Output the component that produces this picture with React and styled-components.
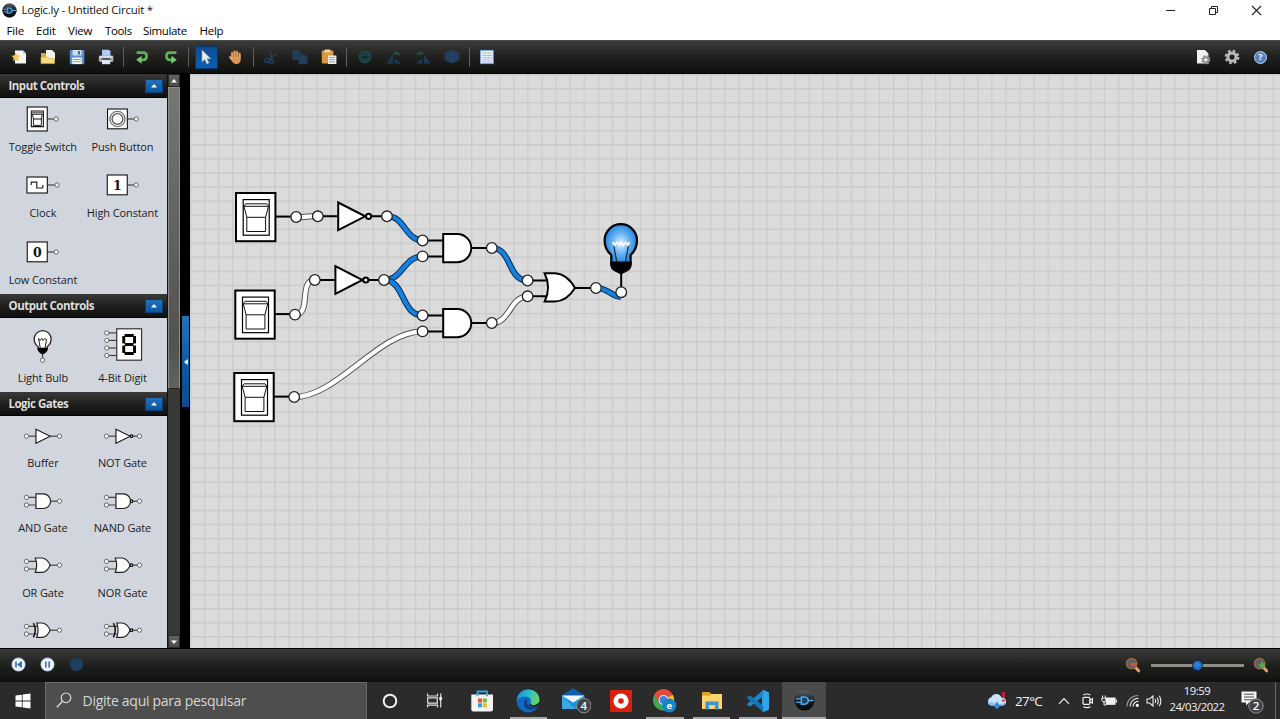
import React from "react";
import styled, { createGlobalStyle, css } from "styled-components";

const GlobalStyle = createGlobalStyle`
  * { box-sizing: border-box; }
  html, body { margin: 0; padding: 0; overflow: hidden; }
  body { font-family: "Open Sans", "Noto Sans", sans-serif; background: #000; }
  svg { display: block; flex: none; }
`;

const Screen = styled.div`
  width: 1280px;
  height: 719px;
  display: flex;
  flex-direction: column;
  overflow: hidden;
`;

/* ---------- window chrome ---------- */

const TitleBar = styled.header`
  height: 21px;
  flex: none;
  display: flex;
  align-items: center;
  padding: 0 2px 1px 2px;
  background: #fff;
`;

const Title = styled.span`
  margin-left: 4.5px;
  font-size: 11.5px;
  line-height: 20px;
  letter-spacing: -0.25px;
  color: #111;
  white-space: nowrap;
  flex: 1;
`;

const WindowButton = styled.div`
  width: 43px;
  height: 20px;
  display: flex;
  align-items: center;
  justify-content: center;
`;

const MenuBar = styled.nav`
  height: 19px;
  flex: none;
  display: flex;
  align-items: center;
  padding-left: 6.5px;
  background: #fff;
`;

const MenuItem = styled.span`
  width: ${(p) => p.$w}px;
  font-size: 11.5px;
  line-height: 19px;
  letter-spacing: ${(p) => p.$ls || 0}px;
  color: #000;
  white-space: nowrap;
`;

const darkBar = css`
  background: linear-gradient(#3a3b39, #20211f 50%, #0f100e);
`;

const ToolBar = styled.div`
  height: 34px;
  flex: none;
  display: flex;
  align-items: center;
  padding: 0 5px 0 4.5px;
  border-bottom: 1px solid #000;
  border-top: 1px solid #4a4a4a;
  ${darkBar}
`;

const ToolCell = styled.div`
  width: 29px;
  height: 32px;
  display: flex;
  align-items: center;
  justify-content: center;
`;

const ActiveTool = styled.div`
  width: 23px;
  height: 23px;
  display: flex;
  align-items: center;
  justify-content: center;
  background: linear-gradient(#0d4e92, #0b5db0);
  border: 1px solid #07366a;
`;

const Separator = styled.div`
  width: 6.7px;
  height: 20px;
  display: flex;
  justify-content: center;
  &::after {
    content: "";
    width: 1px;
    background: #5d5d5b;
  }
`;

const Spacer = styled.div`
  flex: 1;
`;

/* ---------- work area ---------- */

const WorkArea = styled.div`
  height: 574px;
  flex: none;
  display: flex;
`;

const SideBar = styled.aside`
  width: 168px;
  height: 574px;
  overflow: hidden;
  background: #d1d6de;
  border-right: 1px solid #111;
`;

const SectionHeader = styled.div`
  height: 24px;
  display: flex;
  align-items: center;
  justify-content: space-between;
  padding: 0 4px 1px 8.5px;
  border-bottom: 1px solid #000;
  font-size: 11.5px;
  font-weight: 700;
  letter-spacing: -0.5px;
  color: #dcdcdc;
  white-space: nowrap;
  ${darkBar}
`;

const CollapseButton = styled.div`
  width: 18px;
  height: 14px;
  margin-top: 2px;
  display: flex;
  align-items: center;
  justify-content: center;
  background: linear-gradient(#2270bd, #0a559f);
  border: 1px solid #0a3e78;
`;

const Palette = styled.div`
  height: ${(p) => p.$h}px;
  overflow: hidden;
  padding-left: 3.2px;
  display: grid;
  grid-template-columns: 79.5px 79.5px;
  grid-auto-rows: ${(p) => p.$row}px;
`;

const PaletteItem = styled.div`
  display: flex;
  flex-direction: column;
  align-items: center;
`;

const PaletteLabel = styled.span`
  font-size: 11px;
  line-height: 14px;
  letter-spacing: -0.12px;
  color: #1c1c1c;
  white-space: nowrap;
`;

const ScrollBar = styled.div`
  width: 12px;
  height: 574px;
  display: flex;
  flex-direction: column;
  background: #383935;
`;

const ScrollButton = styled.div`
  height: 13px;
  display: flex;
  align-items: center;
  justify-content: center;
  background: linear-gradient(#63645f, #4b4c49);
  border: 1px solid #2b2b29;
`;

const ScrollThumb = styled.div`
  height: 302px;
  background: linear-gradient(#767772, #52534f 85%, #62635f);
  border: 1px solid #8b8c87;
  border-bottom-color: #222;
`;

const Divider = styled.div`
  width: 10px;
  height: 574px;
  padding: 242px 1px 0 2px;
  background: #000;
`;

const DividerHandle = styled.div`
  height: 91px;
  display: flex;
  align-items: center;
  justify-content: center;
  background: linear-gradient(#2672b8, #0c56a0 60%, #0b4c90);
`;

const Canvas = styled.main`
  width: 1090px;
  height: 574px;
  background-color: #dbdbdb;
`;

/* ---------- status bar ---------- */

const StatusBar = styled.div`
  height: 34px;
  flex: none;
  display: flex;
  align-items: center;
  padding: 0 11px 2px 4px;
  border-top: 1px solid #000;
  ${darkBar}
`;

const Slider = styled.div`
  width: 93px;
  height: 14px;
  margin: 1px 9px 0 10px;
  display: flex;
  align-items: center;
  justify-content: center;
  background: linear-gradient(#8d8c86, #8d8c86) center / 100% 3px no-repeat;
`;

const SliderKnob = styled.div`
  width: 11px;
  height: 11px;
  border-radius: 50%;
  background: radial-gradient(circle at 50% 40%, #3288d8, #0b5cae);
  border: 1px solid #072f5b;
`;

/* ---------- taskbar ---------- */

const TaskBar = styled.footer`
  height: 37px;
  flex: none;
  display: flex;
  background: #2b2b2b;
`;

const StartButton = styled.div`
  width: 45px;
  display: flex;
  align-items: center;
  justify-content: center;
`;

const SearchBox = styled.div`
  width: 322px;
  display: flex;
  align-items: center;
  padding: 0 0 2px 10px;
  background: #4e4e4e;
  border: 1px solid #6c6c6c;
  border-bottom: 0;
`;

const SearchText = styled.span`
  margin-left: 10.5px;
  font-size: 14px;
  letter-spacing: -0.28px;
  color: #d6d6d6;
  white-space: nowrap;
`;

const TaskButton = styled.div`
  width: ${(p) => p.$w}px;
  height: 37px;
  display: flex;
  align-items: center;
  justify-content: center;
  background: ${(p) => (p.$active ? "#4b4b4b" : "transparent")};
  ${(p) =>
    p.$line &&
    css`
      background-image: linear-gradient(#aaa6ab, #aaa6ab);
      background-size: ${p.$line}px 2px;
      background-position: center bottom;
      background-repeat: no-repeat;
    `}
`;

const Tray = styled.div`
  display: flex;
  align-items: center;
  margin-left: auto;
  color: #f2f2f2;
`;

const TrayCell = styled.div`
  width: ${(p) => p.$w}px;
  display: flex;
  align-items: center;
  justify-content: center;
`;

const Temperature = styled.span`
  width: 35px;
  font-size: 13.5px;
  letter-spacing: -0.65px;
  white-space: nowrap;
`;

const Clock = styled.div`
  width: 66px;
  padding-bottom: 3px;
  display: flex;
  flex-direction: column;
  align-items: center;
  font-size: 11.3px;
  line-height: 16.5px;
  letter-spacing: -0.48px;
`;

const ShowDesktop = styled.div`
  width: 5px;
  height: 37px;
  border-left: 1px solid #6a6a6a;
`;

/* ---------- small drawings ---------- */

const Arrow = ({ dir = "up", size = 6 }) => {
  const d = { up: "M0 4.5L3 1L6 4.5Z", down: "M0 1.5L3 5L6 1.5Z", left: "M4.8 0L1 3L4.8 6Z" }[dir];
  return (
    <svg width={size} height={size} viewBox="0 0 6 6">
      <path d={d} fill="#fff" />
    </svg>
  );
};

const LogicLogo = ({ size }) => (
  <svg width={size} height={size} viewBox="0 0 20 20">
    <defs>
      <linearGradient id="orb" x1="0" y1="0" x2="0" y2="1">
        <stop offset="0" stopColor="#5a6268" />
        <stop offset=".5" stopColor="#161c22" />
        <stop offset="1" stopColor="#05080b" />
      </linearGradient>
    </defs>
    <circle cx="10" cy="10" r="9.6" fill="url(#orb)" />
    <path d="M2 8.4H7M2 11.8H7M13 10H18.5" stroke="#5aa9e6" strokeWidth="1.3" fill="none" />
    <path d="M7 6.6H10Q13.6 7 13.6 10T10 13.6H7Z" stroke="#5aa9e6" strokeWidth="1.4" fill="#17466f" />
  </svg>
);

const Svg16 = ({ children, size = 16 }) => (
  <svg width={size} height={size} viewBox="0 0 16 16">
    {children}
  </svg>
);

const NewIcon = () => (
  <Svg16>
    <path d="M4 1.5H12L15 4.5V14.5H4Z" fill="#f4f4f2" />
    <path d="M12 1.5V4.5H15Z" fill="#c9c9c9" />
    <path d="M4.7 4L5.8 6.6L8.6 7L6.6 8.9L7.1 11.7L4.7 10.3L2.3 11.7L2.8 8.9L.8 7L3.6 6.6Z" fill="#f7cf52" stroke="#e3a52a" strokeWidth=".5" />
  </Svg16>
);
const OpenIcon = () => (
  <Svg16>
    <path d="M1 4H5L6 5H13V14H1Z" fill="#d9a83c" />
    <path d="M6 1H12L15 4V11H6Z" fill="#f6f3ea" />
    <path d="M1 8.2H8L9.5 9.6H14.5V14.6H1Z" fill="#f6dc83" stroke="#d9ad45" strokeWidth=".6" />
  </Svg16>
);
const SaveIcon = () => (
  <Svg16>
    <rect x=".8" y="1" width="14.5" height="14.2" rx="1.2" fill="#5b8ed0" />
    <rect x="3.6" y="1" width="9" height="5.5" fill="#cddcf0" />
    <rect x="9" y="2" width="2" height="3.5" fill="#44699f" />
    <rect x="3.3" y="8.5" width="9.5" height="6.5" fill="#f3f6ee" />
    <path d="M4.3 10.5H12M4.3 12.7H12" stroke="#7cb870" strokeWidth="1" />
  </Svg16>
);
const PrintIcon = () => (
  <Svg16>
    <path d="M4 .8H11L12.5 2.5V8H4Z" fill="#a9cdf5" />
    <rect x=".8" y="6.5" width="14.6" height="6.4" rx="1.4" fill="#a9abae" />
    <rect x="1.5" y="7" width="13" height="1.8" fill="#dadcde" />
    <rect x="3.8" y="9" width="8.6" height="2" fill="#55585c" />
    <path d="M4 11H12.2V15.2H4Z" fill="#dbe9fb" />
  </Svg16>
);
const TurnIcon = ({ flip }) => (
  <Svg16>
    <g transform={flip ? "translate(16 0) scale(-1 1)" : undefined}>
      <path d="M2.6 3.6H9.2Q12.6 3.6 12.6 7.2T9.2 10.8H6.5" fill="none" stroke="#5fb158" strokeWidth="2.7" />
      <path d="M7.6 6.8L2.2 10.8L7.6 14.8Z" fill="#74c96c" />
    </g>
  </Svg16>
);
const CursorIcon = () => (
  <Svg16>
    <path d="M4 1V13L6.8 10.5L8.8 15L11 14L9 9.8H12.8Z" fill="#e9edf1" stroke="#8b9eb2" strokeWidth=".6" />
  </Svg16>
);
const HandIcon = () => (
  <Svg16 size={15}>
    <path d="M4.4 8V3.2M7 7V1.6M9.7 7V2M12.4 8V4M4.5 10L2.2 7.6" stroke="#ad6d3c" strokeWidth="2.6" strokeLinecap="round" />
    <path d="M3.2 7.4H13.6V10.5Q13 15 9 15Q5.8 15 3.2 10Z" fill="#d99556" />
    <path d="M4.4 8V3.4M7 8V1.8M9.7 8V2.2M12.4 8V4.2M4.5 10.4L2.3 7.8" stroke="#e9ab70" strokeWidth="1.5" strokeLinecap="round" />
  </Svg16>
);
const CutIcon = () => (
  <Svg16>
    <path d="M7 1L8.6 10M13.6 4.5L5.5 10.8" stroke="#2a3d4b" strokeWidth="1.7" />
    <circle cx="3.8" cy="11.4" r="2" fill="none" stroke="#1c3f60" strokeWidth="1.4" />
    <circle cx="8.6" cy="12.8" r="2" fill="none" stroke="#1c3f60" strokeWidth="1.4" />
  </Svg16>
);
const CopyIcon = () => (
  <Svg16>
    <path d="M.5 1H6L9 4V11H.5ZM6.5 5.5H12.5L15.5 8V15.3H6.5Z" fill="#213f5c" />
    <path d="M6.5 11V5.5H9" stroke="#1b344c" fill="none" />
  </Svg16>
);
const PasteIcon = () => (
  <Svg16>
    <rect x=".8" y="1.5" width="11.6" height="13" rx="1" fill="#d9983d" />
    <rect x="3.5" y=".5" width="6" height="3" rx="1" fill="#f2d79b" />
    <path d="M7 6.5H15.4V15H7Z" fill="#ececec" />
    <path d="M8.3 8.5H14M8.3 10.7H14M8.3 12.9H14" stroke="#9a9a9a" strokeWidth=".9" />
  </Svg16>
);
const ZoomResetIcon = () => (
  <Svg16>
    <circle cx="8" cy="8" r="5.6" fill="#1a3b48" stroke="#244a42" strokeWidth="1.4" />
    <path d="M4.8 8H11.2" stroke="#14251f" strokeWidth="1.5" />
  </Svg16>
);
const RotateIcon = ({ flip }) => (
  <Svg16>
    <g transform={flip ? "translate(16 0) scale(-1 1)" : undefined}>
      <path d="M7 4.4V14.5H.8ZM8.5 9.4L15.2 14.5H8.5Z" fill="#1e3a52" />
      <path d="M6.8 4.5Q9.5 1 13.4 4L14.6 6H10.2Q9 5.5 6.8 4.5Z" fill="#284b36" />
    </g>
  </Svg16>
);
const CubeIcon = () => (
  <Svg16>
    <path d="M8 1L15.4 4V11L8 14.5L.6 11V4Z" fill="#213f5e" />
  </Svg16>
);
const TableIcon = () => (
  <Svg16>
    <rect x="1.6" y="1.4" width="12.6" height="13.2" fill="#f2f5fa" stroke="#7fa6e0" />
    <rect x="3.2" y="3" width="9.4" height="1.7" fill="#c9d7b6" />
    <path d="M3 6.4H13M3 8.6H13M3 10.8H13M3 13H13" stroke="#8fb0e3" strokeWidth=".8" />
    <path d="M6.2 5V14M9.7 5V14" stroke="#b6cbec" strokeWidth=".8" />
  </Svg16>
);
const Gear = ({ cx, cy, r, fill }) => (
  <g>
    <circle cx={cx} cy={cy} r={r * 0.56} fill="none" stroke={fill} strokeWidth={r * 0.42} />
    <circle cx={cx} cy={cy} r={r * 0.86} fill="none" stroke={fill} strokeWidth={r * 0.3} strokeDasharray={`${r * 0.36} ${r * 0.3154}`} />
  </g>
);
const DocGearIcon = () => (
  <Svg16>
    <path d="M2 1H10L13.4 4.5V14.5H2Z" fill="#f1f1ef" />
    <Gear cx={10.8} cy={10.8} r={4.6} fill="#8e8e8c" />
  </Svg16>
);
const GearIcon = () => (
  <Svg16>
    <Gear cx={8} cy={8} r={7.3} fill="#b9b9b7" />
  </Svg16>
);
const HelpDisc = styled.div`
  width: 13px;
  height: 13px;
  border-radius: 50%;
  border: 1.4px solid #c4d7f1;
  background: #5583c2;
  color: #fff;
  font-size: 9px;
  line-height: 10px;
  font-weight: 700;
  text-align: center;
`;

/* ---------- palette drawings ---------- */

const Pin = ({ x, y = 0 }) => <circle cx={x} cy={y} r="2.1" fill="#fff" stroke="#555" strokeWidth=".9" />;
const Lead = ({ d }) => <path d={d} stroke="#444" strokeWidth="1.2" fill="none" />;
const shape = { fill: "#fff", stroke: "#222", strokeWidth: 1.2 };

const art = {
  toggle: (
    <>
      <Lead d="M5 0H11" />
      <rect x="-15.5" y="-12" width="20" height="24" fill="#fff" stroke="#111" strokeWidth="1.1" />
      <path d="M-11.4 -8H.6V7.6H-11.4Z" fill="#fff" stroke="#111" strokeWidth="1.1" />
      <path d="M-11 -6.6H.2" stroke="#777" strokeWidth="1.8" />
      <path d="M-10.3 -5L-9.3 0V6.4H-1.4V0L-.5 -5" fill="none" stroke="#111" strokeWidth=".9" />
      <path d="M-10.4 -4.8H-.4M-9.5 0H-1.2" stroke="#111" />
      <Pin x={13.3} />
    </>
  ),
  push: (
    <>
      <Lead d="M5 0H11" />
      <rect x="-15.2" y="-10" width="19.8" height="19.8" fill="#fff" stroke="#111" strokeWidth="1.1" />
      <circle cx="-5.3" cy="0" r="7.6" fill="#fff" stroke="#777" strokeWidth="1.4" />
      <circle cx="-5.3" cy="0" r="5.4" fill="#fff" stroke="#555" strokeWidth="1.3" />
      <Pin x={13.5} />
    </>
  ),
  clock: (
    <>
      <Lead d="M5 0H12" />
      <rect x="-15.8" y="-8" width="20.4" height="16" fill="#fff" stroke="#111" strokeWidth="1.1" />
      <path d="M-11.5 0V-2.8H-6V3H0V0" fill="none" stroke="#222" strokeWidth="1.2" />
      <Pin x={14.3} />
    </>
  ),
  high: <Constant value="1" />,
  low: <Constant value="0" />,
  bulb: (
    <>
      <Lead d="M-.2 8V14" />
      <path d="M-4.6 5V2.2Q-8.6 -.5 -8.6 -5.4A8.5 8.5 0 0 1 8.4 -5.4Q8.4 -.5 4.4 2.2V5Z" fill="#fff" stroke="#222" strokeWidth="1.3" />
      <path d="M-2.4 4L-4.2 -6L-2.6 -4L-1 -6.2L.4 -4L2 -6L3.8 -5L2.2 4" fill="none" stroke="#222" strokeWidth="1" />
      <path d="M-5.2 3.3H5Q5.2 6.5 2.4 8.8L-.1 10L-2.6 8.8Q-5.4 6.5 -5.2 3.3Z" fill="#000" />
      <Pin x={-0.2} y={15.7} />
    </>
  ),
  digit: (
    <>
      {[-11.6, -4.1, 3.5, 11].map((y) => (
        <g key={y}>
          <Lead d={`M-14 ${y}H-6`} />
          <Pin x={-16} y={y} />
        </g>
      ))}
      <rect x="-6" y="-15.7" width="24.8" height="31.4" fill="#fff" stroke="#333" strokeWidth="1.2" />
      <g stroke="#000" strokeWidth="2.9" fill="none">
        <path d="M1.8 -9H11M1.8 0H11M1.8 9H11" />
        <path d="M1 -8.4V-1M1 1V8.4M11.8 -8.4V-1M11.8 1V8.4" />
      </g>
      <path d="M-.8 -.2L1 -1L2.6 0L1 1ZM13.6 0L11.8 -1L10.2 0L11.8 1Z" fill="#fff" />
    </>
  ),
  buffer: <GateArt kind="buf" />,
  not: <GateArt kind="buf" inv />,
  and: <GateArt kind="and" />,
  nand: <GateArt kind="and" inv />,
  or: <GateArt kind="or" />,
  nor: <GateArt kind="or" inv />,
  xor: <GateArt kind="xor" />,
  xnor: <GateArt kind="xor" inv />,
};

function Constant({ value }) {
  return (
    <>
      <Lead d="M5 0H11" />
      <rect x="-15.5" y="-10" width="20" height="19.8" fill="#fff" stroke="#111" strokeWidth="1.1" />
      <text x="-5.4" y="4.6" fontSize="12.5" fontWeight="700" fontFamily="DejaVu Serif, serif" textAnchor="middle" fill="#111">
        {value}
      </text>
      <Pin x={13.4} />
    </>
  );
}

function GateArt({ kind, inv }) {
  const single = kind === "buf";
  const bodies = {
    buf: "M-6.8 -7L7.4 0L-6.8 7Z",
    and: "M-6.8 -7.3H.5A7.3 7.3 0 0 1 .5 7.3H-6.8Z",
    or: "M-7.5 -7.2H-.5Q4.6 -6.4 7.4 0Q4.6 6.4 -.5 7.2H-7.5Q-4.6 0 -7.5 -7.2Z",
    xor: "M-6 -7.2H-.5Q4.6 -6.4 7.4 0Q4.6 6.4 -.5 7.2H-6Q-3.4 0 -6 -7.2Z",
  };
  return (
    <>
      <Lead d={single ? "M-14 0H-7" : "M-14 -3.8H-5.5M-14 3.8H-5.5"} />
      <Lead d="M7 0H15" />
      <path d={bodies[kind]} {...shape} />
      {kind === "xor" && <path d="M-9.4 -7.2Q-5.6 0 -9.4 7.2" fill="none" stroke="#111" strokeWidth="1.5" />}
      {inv && <circle cx="8.8" cy="0" r="1.3" fill="#fff" stroke="#000" strokeWidth="1.1" />}
      {single ? (
        <Pin x={-16.3} />
      ) : (
        <>
          <Pin x={-16.3} y={-3.8} />
          <Pin x={-16.3} y={3.8} />
        </>
      )}
      <Pin x={16.8} />
    </>
  );
}

const sections = [
  {
    title: "Input Controls", h: 196, row: 66.4, icon: 42,
    items: [["toggle", "Toggle Switch"], ["push", "Push Button"], ["clock", "Clock"], ["high", "High Constant"], ["low", "Low Constant"]],
  },
  {
    title: "Output Controls", h: 74, row: 74, icon: 53,
    items: [["bulb", "Light Bulb"], ["digit", "4-Bit Digit"]],
  },
  {
    title: "Logic Gates", h: 240, row: 64.6, icon: 40.4,
    items: [["buffer", "Buffer"], ["not", "NOT Gate"], ["and", "AND Gate"], ["nand", "NAND Gate"], ["or", "OR Gate"], ["nor", "NOR Gate"], ["xor"], ["xnor"]],
  },
];

const Section = ({ title, h, row, icon, items }) => (
  <section>
    <SectionHeader>
      {title}
      <CollapseButton>
        <Arrow />
      </CollapseButton>
    </SectionHeader>
    <Palette $h={h} $row={row}>
      {items.map(([key, label]) => (
        <PaletteItem key={key}>
          <svg width="79.5" height={icon} viewBox={`-39.75 ${-icon / 2} 79.5 ${icon}`}>
            {art[key]}
          </svg>
          {label && <PaletteLabel>{label}</PaletteLabel>}
        </PaletteItem>
      ))}
    </Palette>
  </section>
);

/* ---------- circuit ---------- */

const Wire = ({ d, on }) => (
  <g fill="none">
    <path d={d} stroke={on ? "#0c2f52" : "#555"} strokeWidth="6.2" />
    <path d={d} stroke={on ? "#1480df" : "#fff"} strokeWidth="4.2" />
  </g>
);
const Node = ({ x, y }) => <circle cx={x} cy={y} r="5.3" fill="#fff" stroke="#222" strokeWidth="1.3" />;
const Line = ({ d }) => <path d={d} stroke="#000" strokeWidth="2" fill="none" />;

const Switch = ({ x, y }) => (
  <g transform={`translate(${x} ${y})`}>
    <path d="M40 24.6H56" stroke="#000" strokeWidth="2" />
    <rect x="1" y="1" width="39.4" height="48.2" fill="#fff" stroke="#000" strokeWidth="2" />
    <rect x="8.2" y="7.6" width="26" height="35.6" fill="#fff" stroke="#000" strokeWidth="1.2" />
    <g fill="none" stroke="#111" strokeWidth="1">
      <path d="M8.8 14.3L10.8 11.8H31.7L33.6 14.3Z" />
      <path d="M9 14.5L11.8 25.3H30.6L33.4 14.5" />
      <path d="M11.8 25.3V39.5H30.6V25.3" />
    </g>
  </g>
);

const Inverter = ({ x, y }) => (
  <g>
    <Line d={`M${x - 15} ${y + 0.3}H${x}M${x + 32} ${y + 0.3}H${x + 46}`} />
    <path d={`M${x + 1} ${y - 13.5}L${x + 28} ${y + 0.3}L${x + 1} ${y + 14.1}Z`} fill="#fff" stroke="#000" strokeWidth="2" />
    <circle cx={x + 31.4} cy={y + 0.3} r="2.6" fill="#fff" stroke="#000" strokeWidth="2" />
  </g>
);

const AndGate = ({ y }) => (
  <g>
    <Line d={`M426 ${y - 7.5}H443M426 ${y + 8.4}H443M471 ${y}H488`} />
    <path d={`M443.2 ${y - 14}H457.2A14 14 0 0 1 457.2 ${y + 14.2}H443.2Z`} fill="#fff" stroke="#000" strokeWidth="2" />
  </g>
);

const Circuit = () => (
  <svg width="1090" height="574" viewBox="190 74 1090 574">
    <defs>
      <pattern id="grid" x="189.9" y="73.8" width="14.06" height="14.06" patternUnits="userSpaceOnUse">
        <path d="M.7 0V14.06M0 .7H14.06" stroke="#c9cacb" strokeWidth="1.2" />
      </pattern>
      <radialGradient id="glow" cx=".5" cy=".48" r=".56">
        <stop offset="0" stopColor="#e2f2ff" />
        <stop offset=".45" stopColor="#6cb6f5" />
        <stop offset="1" stopColor="#1279d6" />
      </radialGradient>
    </defs>
    <rect x="190" y="74" width="1090" height="574" fill="url(#grid)" />

    <Switch x={235} y={192} />
    <Switch x={234.3} y={289.5} />
    <Switch x={233.3} y={372} />
    <Inverter x={337.2} y={216} />
    <Inverter x={334.4} y={279.7} />
    <AndGate y={248} />
    <AndGate y={323} />
    <Line d="M531 280.5H546M531 296.3H546M574 288H592M621.2 270V288" />
    <path d="M544.6 273.2H555Q567 273.8 575 288Q567 301 555 301.6H544.6Q551.5 287.5 544.6 273.2Z" fill="#fff" stroke="#000" strokeWidth="2" />

    <Wire d="M296 217.3C306 217.3 308 216 318 216" />
    <Wire d="M295 314.5C312 314.5 298 280 315 280" />
    <Wire d="M294 397C338 397 378 331.4 423 331.4" />
    <Wire on d="M387 216C405 216 405 240.5 423 240.5" />
    <Wire on d="M384 280C403 280 403 256.4 423 256.4" />
    <Wire on d="M384 280C405 280 401 315.5 423 315.5" />
    <Wire on d="M492 248C512 248 507 280.5 528 280.5" />
    <Wire d="M492 323C510 323 510 296.3 528 296.3" />
    <Wire on d="M596 288C608 288 612 296.8 620.5 296.8" />

    <path d="M611.3 264V255Q604.6 249 604.6 240.4A16.2 16.2 0 0 1 637 240.4Q637 249 630.6 255V264Z" fill="url(#glow)" stroke="#000" strokeWidth="2.2" />
    <path d="M613.8 246L616.8 262M628.4 246L625.4 262" stroke="#0d2a44" strokeWidth="1.2" />
    <path d="M612.6 242L614.8 245L617 242.5L619.2 245.3L621.2 242.5L623.4 245.3L625.6 242.5L627.6 245L629.6 242" fill="none" stroke="#fff" strokeWidth="1.8" />
    <path d="M610.3 261.5H631.6V266Q631 269 628 271L621 274.4L614 271Q610.8 269 610.3 266Z" fill="#000" />

    {[
      [296.2, 217], [317.8, 216.3], [387, 216.3], [422.6, 240.5], [422.6, 256.4],
      [295, 314.6], [314.8, 280], [384, 280], [422.6, 315.5], [422.6, 331.4],
      [294.2, 397], [491.8, 248], [491.8, 323], [527.6, 280.5], [527.6, 296.3],
      [595.9, 288], [621.2, 292.2],
    ].map(([x, y]) => (
      <Node key={`${x}-${y}`} x={x} y={y} />
    ))}
  </svg>
);

/* ---------- status and taskbar drawings ---------- */

const RoundControl = ({ children, dim }) => (
  <svg width="15" height="15" viewBox="0 0 15 15">
    <circle cx="7.5" cy="7.5" r="6.6" fill={dim ? "#1f3f5e" : "#eef4fd"} stroke={dim ? "#1b344c" : "#b9cdea"} strokeWidth=".8" />
    {children}
  </svg>
);

const Magnifier = ({ plus }) => (
  <Svg16>
    <path d="M9.8 9.8L13.6 13.8" stroke="#dca565" strokeWidth="3" strokeLinecap="round" />
    <circle cx="6.6" cy="6.6" r="5.2" fill="#5c6066" stroke="#9a6b3c" strokeWidth="1.3" />
    {plus ? (
      <path d="M9 5.2V11.6M5.8 8.4H12.2" stroke="#52b048" strokeWidth="2.2" />
    ) : (
      <path d="M5.6 7.6H11.6" stroke="#e64a3c" strokeWidth="3" />
    )}
  </Svg16>
);

const StoreIcon = () => (
  <svg width="24" height="24" viewBox="0 0 24 24">
    <path d="M7.5 7V2.5H17V7" fill="none" stroke="#2aa9ea" strokeWidth="1.8" />
    <path d="M1.3 5.5H23V20.5Q23 22.5 21 22.5H3.3Q1.3 22.5 1.3 20.5Z" fill="#f3f3f3" />
    <path d="M7.5 5.5V7.2M17 5.5V7.2" stroke="#2aa9ea" strokeWidth="1.8" />
    <rect x="8" y="9.5" width="4" height="4" fill="#e5532d" />
    <rect x="12.8" y="9.5" width="4" height="4" fill="#7ab52c" />
    <rect x="8" y="14.3" width="4" height="4" fill="#2a9fe0" />
    <rect x="12.8" y="14.3" width="4" height="4" fill="#f4b81f" />
  </svg>
);
const EdgeIcon = () => (
  <svg width="24" height="24" viewBox="0 0 24 24">
    <defs>
      <linearGradient id="edgeTop" x1="0" y1=".3" x2="1" y2=".5">
        <stop offset="0" stopColor="#1b8fd8" />
        <stop offset=".5" stopColor="#2bbcd0" />
        <stop offset="1" stopColor="#66d95a" />
      </linearGradient>
    </defs>
    <circle cx="12" cy="12" r="11.4" fill="#1268bd" />
    <path d="M.7 11.5C1.5 4.5 6.5 .6 12 .6C19 .6 23.4 5.5 23.4 10.5C23.4 14.2 20.5 16.3 17.5 16.3C14.8 16.3 13.6 15 14.4 13.9C16.3 11 13.5 7.5 9.5 7.5C5 7.5 1.5 10 .7 11.5Z" fill="url(#edgeTop)" />
    <path d="M8.2 12.5C7 18 11 21 15.5 20.5C18.5 20.2 20.8 18.8 22 17.3C18.8 18.7 15.5 18.4 13 16.8C11 15.5 10.5 13.5 11 10.4C9.5 10.5 8.5 11.5 8.2 12.5Z" fill="#0d3f86" />
    <path d="M22 17.2C19 18.7 14.6 18 12.9 15.5L14.3 14C14.8 15.8 17 16.4 19 16.1L23 13.5L24 14Z" fill="#2b2b2b" />
  </svg>
);
const Badge = ({ x, y, n }) => (
  <g>
    <circle cx={x} cy={y} r="7.2" fill="#414447" stroke="#8d8f91" strokeWidth="1" />
    <text x={x} y={y + 4.1} fill="#fff" fontSize="11.5" fontWeight="600" textAnchor="middle" fontFamily="Open Sans, sans-serif">
      {n}
    </text>
  </g>
);
const MailIcon = () => (
  <svg width="30" height="28" viewBox="1 0 30 28">
    <path d="M2 8.5L13.2 1L24.5 8.5Z" fill="#0f5fae" />
    <path d="M2 8.5H24.5V22H2Z" fill="#2191dc" />
    <path d="M2 8.5H24.5L13.2 15.5Z" fill="#eef6fc" />
    <path d="M2 8.5L15 22H2Z" fill="#39a9ec" />
    <Badge x={23.8} y={18.7} n="4" />
  </svg>
);
const RecorderIcon = () => (
  <svg width="24" height="24" viewBox="0 0 24 24">
    <rect x="1" y="1" width="22" height="22" rx="1" fill="#db1f0c" />
    <circle cx="12" cy="12" r="5.2" fill="none" stroke="#fff" strokeWidth="4.8" />
  </svg>
);
const ChromeIcon = () => (
  <svg width="24" height="26" viewBox="1 0 24 26">
    <circle cx="11.5" cy="12" r="10.6" fill="#3ba757" />
    <path d="M11.5 12L2.3 6.7A10.6 10.6 0 0 1 20.7 6.7Z" fill="#e2493b" />
    <path d="M11.5 12L20.7 6.7A10.6 10.6 0 0 1 11.5 22.6L16 14Z" fill="#f5c02c" />
    <path d="M2.3 6.7L7 14.8L11.5 6.7Z" fill="#e2493b" />
    <circle cx="11.5" cy="12" r="5" fill="#f5f5f5" />
    <circle cx="11.5" cy="12" r="4" fill="#3f7fe0" />
    <circle cx="17.3" cy="17.5" r="7" fill="#1484cd" />
    <text x="17.3" y="20.6" fontSize="9.5" fontWeight="700" fill="#fff" textAnchor="middle" fontFamily="Open Sans, sans-serif">
      e
    </text>
  </svg>
);
const FolderIcon = () => (
  <svg width="22" height="20" viewBox="0 0 22 20">
    <path d="M1 1H8.5L10.5 3H21V9H1Z" fill="#dca21f" />
    <path d="M1 4.5H9L10.5 3H21V18H1Z" fill="#f9d56b" />
    <path d="M4.5 10.5H17.5V18.5H14V14H8V18.5H4.5Z" fill="#3f94d4" />
  </svg>
);
const CodeIcon = () => (
  <svg width="24" height="24" viewBox="0 0 24 24">
    <path d="M17 .8L23 3.5V20.5L17 23.2L16 20V4Z" fill="#2fa4ea" />
    <path d="M17.3 .8L17 7.5L4.2 17.6L1.3 16.2V14.8Z" fill="#1f86cc" />
    <path d="M17.3 23.2L17 16.5L4.2 6.4L1.3 7.8V9.2Z" fill="#1573b8" />
  </svg>
);
const TaskViewIcon = () => (
  <svg width="18" height="18" viewBox="0 0 18 18">
    <g fill="none" stroke="#e2e2e2" strokeWidth="1.2">
      <path d="M1.5 1.5V4H11.5V1.5M1.5 15.5V13.2H11.5V15.5M1.7 5.8H11.3V11.2H1.7Z" />
      <path d="M14.7 1.5V15.5" />
    </g>
    <rect x="13.3" y="5" width="2.8" height="3" fill="#f2f2f2" />
  </svg>
);
const WeatherIcon = () => (
  <svg width="22" height="20" viewBox="0 0 22 20">
    <path d="M5.5 14.5A4.2 4.2 0 0 1 5.3 6.3A5.6 5.6 0 0 1 15.5 6.5A4 4 0 0 1 16.5 14.5Z" fill="#c9e1f8" />
    <path d="M1.6 12Q5 10.5 9 12.5T19.5 11.5Q19 14.5 16.5 14.5H5.5Q2.6 14.5 1.6 12Z" fill="#8fbdec" />
    <path d="M11 10.5Q14 14 13.4 16A2.5 2.5 0 0 1 8.6 16Q8.2 14 11 10.5Z" fill="#2f8de0" />
    <path d="M17.5 1V7M17.5 8.6V10.6" stroke="#d41f35" strokeWidth="2.6" />
  </svg>
);
const CameraIcon = () => (
  <svg width="14" height="18" viewBox="0 0 14 18">
    <g fill="none" stroke="#f0f0f0" strokeWidth="1.2">
      <rect x="2" y="5.3" width="6.8" height="7" rx="1" />
      <path d="M8.8 8L11.4 6.8V11L8.8 9.8M2.4 3Q5.8 1 9.4 3M2.4 14.8Q5.8 16.6 9.4 14.8" />
    </g>
  </svg>
);
const BatteryIcon = () => (
  <svg width="17" height="14" viewBox="0 0 17 14">
    <rect x="5.2" y="4" width="8.8" height="6.3" fill="#f0f0f0" stroke="#f0f0f0" />
    <path d="M15.2 5.6V8.8" stroke="#f0f0f0" strokeWidth="1.4" />
    <path d="M1.5 1.5V4M4.3 1.5V4M.8 4.2H5V6Q5 7.8 3 7.8T.8 6ZM3 8V11H5" fill="none" stroke="#f0f0f0" />
  </svg>
);
const WifiIcon = () => (
  <svg width="14" height="14" viewBox="0 0 14 14">
    <g fill="none" strokeWidth="1.2">
      <path d="M1 12.5A11 11 0 0 1 12.5 1.5" stroke="#969696" />
      <path d="M4 12.5A8.2 8.2 0 0 1 12.5 4.3" stroke="#ddd" />
      <path d="M7 12.5A5.2 5.2 0 0 1 12.5 7.3" stroke="#eee" />
    </g>
    <circle cx="11.3" cy="11.3" r="1.6" fill="#fff" />
  </svg>
);
const SoundIcon = () => (
  <svg width="17" height="14" viewBox="0 0 17 14">
    <g fill="none" stroke="#f0f0f0" strokeWidth="1.1">
      <path d="M1 5H3.6L7 2V12L3.6 9H1Z" />
      <path d="M9 5Q10.3 7 9 9M11.2 3.5Q13.2 7 11.2 10.5M13.3 1.8Q16.4 7 13.3 12.2" />
    </g>
  </svg>
);
const NoticeIcon = () => (
  <svg width="26" height="26" viewBox="1 0 26 26">
    <path d="M2.5 3.5H17.5V14.5H10L7 17.5V14.5H2.5Z" fill="#f4f4f4" />
    <path d="M5 6.2H15M5 9H15M5 11.8H15" stroke="#4a4a4a" strokeWidth="1" />
    <Badge x={17} y={18} n="2" />
  </svg>
);

export default function App() {
  return (
    <Screen>
      <GlobalStyle />
      <TitleBar>
        <LogicLogo size={15} />
        <Title>Logic.ly - Untitled Circuit *</Title>
        <WindowButton>
          <svg width="11" height="11" viewBox="0 0 11 11"><path d="M1 5.5H10" stroke="#222" /></svg>
        </WindowButton>
        <WindowButton>
          <svg width="11" height="11" viewBox="0 0 11 11"><path d="M1.5 3.5H7.5V9.5H1.5ZM3.5 3.5V1.5H9.5V7.5H7.5" fill="none" stroke="#222" /></svg>
        </WindowButton>
        <WindowButton>
          <svg width="11" height="11" viewBox="0 0 11 11"><path d="M1 1L10 10M10 1L1 10" stroke="#222" strokeWidth="1.1" /></svg>
        </WindowButton>
      </TitleBar>
      <MenuBar>
        <MenuItem $w={29.5} $ls={-0.2}>File</MenuItem>
        <MenuItem $w={32} $ls={-0.2}>Edit</MenuItem>
        <MenuItem $w={37} $ls={-0.2}>View</MenuItem>
        <MenuItem $w={38} $ls={-0.35}>Tools</MenuItem>
        <MenuItem $w={56.5} $ls={-0.38}>Simulate</MenuItem>
        <MenuItem $w={30} $ls={-0.25}>Help</MenuItem>
      </MenuBar>
      <ToolBar>
        <ToolCell><NewIcon /></ToolCell>
        <ToolCell><OpenIcon /></ToolCell>
        <ToolCell><SaveIcon /></ToolCell>
        <ToolCell><PrintIcon /></ToolCell>
        <Separator />
        <ToolCell><TurnIcon /></ToolCell>
        <ToolCell><TurnIcon flip /></ToolCell>
        <Separator />
        <ToolCell><ActiveTool><CursorIcon /></ActiveTool></ToolCell>
        <ToolCell><HandIcon /></ToolCell>
        <Separator />
        <ToolCell><CutIcon /></ToolCell>
        <ToolCell><CopyIcon /></ToolCell>
        <ToolCell><PasteIcon /></ToolCell>
        <Separator />
        <ToolCell><ZoomResetIcon /></ToolCell>
        <ToolCell><RotateIcon /></ToolCell>
        <ToolCell><RotateIcon flip /></ToolCell>
        <ToolCell><CubeIcon /></ToolCell>
        <Separator />
        <ToolCell><TableIcon /></ToolCell>
        <Spacer />
        <ToolCell><DocGearIcon /></ToolCell>
        <ToolCell><GearIcon /></ToolCell>
        <ToolCell><HelpDisc>?</HelpDisc></ToolCell>
      </ToolBar>

      <WorkArea>
        <SideBar>
          {sections.map((s) => (
            <Section key={s.title} {...s} />
          ))}
        </SideBar>
        <ScrollBar>
          <ScrollButton><Arrow /></ScrollButton>
          <ScrollThumb />
          <Spacer />
          <ScrollButton><Arrow dir="down" /></ScrollButton>
        </ScrollBar>
        <Divider>
          <DividerHandle><Arrow dir="left" /></DividerHandle>
        </Divider>
        <Canvas>
          <Circuit />
        </Canvas>
      </WorkArea>

      <StatusBar>
        <ToolCell>
          <RoundControl><path d="M5 4.5V10.5M10.2 4.5V10.5" stroke="#2c68b4" strokeWidth="1.6" /><path d="M9.6 4.8V10.2L6 7.5Z" fill="#2c68b4" /></RoundControl>
        </ToolCell>
        <ToolCell>
          <RoundControl><path d="M5.8 4.5V10.5M9.2 4.5V10.5" stroke="#2c68b4" strokeWidth="1.5" /></RoundControl>
        </ToolCell>
        <ToolCell><RoundControl dim /></ToolCell>
        <Spacer />
        <Magnifier />
        <Slider><SliderKnob /></Slider>
        <Magnifier plus />
      </StatusBar>

      <TaskBar>
        <StartButton>
          <svg width="16" height="16" viewBox="0 0 16 16"><path d="M.5 2.6L6.8 1.7V7.6H.5ZM7.6 1.6L15.5 .4V7.6H7.6ZM.5 8.4H6.8V14.3L.5 13.4ZM7.6 8.4H15.5V15.6L7.6 14.4Z" fill="#fff" /></svg>
        </StartButton>
        <SearchBox>
          <svg width="16" height="16" viewBox="0 0 16 16"><circle cx="10" cy="5.8" r="4.8" fill="none" stroke="#dcdcdc" strokeWidth="1.2" /><path d="M6.6 9.3L.8 15.2" stroke="#dcdcdc" strokeWidth="1.3" /></svg>
          <SearchText>Digite aqui para pesquisar</SearchText>
        </SearchBox>
        <TaskButton $w={45}>
          <svg width="16" height="16" viewBox="0 0 16 16"><circle cx="8" cy="8" r="6.3" fill="none" stroke="#f0f0f0" strokeWidth="2" /></svg>
        </TaskButton>
        <TaskButton $w={46}><TaskViewIcon /></TaskButton>
        <TaskButton $w={47}><StoreIcon /></TaskButton>
        <TaskButton $w={46} $line={37}><EdgeIcon /></TaskButton>
        <TaskButton $w={50}><MailIcon /></TaskButton>
        <TaskButton $w={39}><RecorderIcon /></TaskButton>
        <TaskButton $w={50} $line={38}><ChromeIcon /></TaskButton>
        <TaskButton $w={43} $line={37}><FolderIcon /></TaskButton>
        <TaskButton $w={49} $line={38}><CodeIcon /></TaskButton>
        <TaskButton $w={44} $line={44} $active><LogicLogo size={21} /></TaskButton>
        <Tray>
          <TrayCell $w={21}><WeatherIcon /></TrayCell>
          <TrayCell $w={8} />
          <Temperature>27°C</Temperature>
          <TrayCell $w={28}>
            <svg width="12" height="8" viewBox="0 0 12 8"><path d="M1 6.8L6 1.6L11 6.8" fill="none" stroke="#f0f0f0" strokeWidth="1.2" /></svg>
          </TrayCell>
          <TrayCell $w={19}><CameraIcon /></TrayCell>
          <TrayCell $w={24}><BatteryIcon /></TrayCell>
          <TrayCell $w={23}><WifiIcon /></TrayCell>
          <TrayCell $w={20}><SoundIcon /></TrayCell>
          <Clock>
            <span>19:59</span>
            <span>24/03/2022</span>
          </Clock>
          <TrayCell $w={45}><NoticeIcon /></TrayCell>
          <ShowDesktop />
        </Tray>
      </TaskBar>
    </Screen>
  );
}
